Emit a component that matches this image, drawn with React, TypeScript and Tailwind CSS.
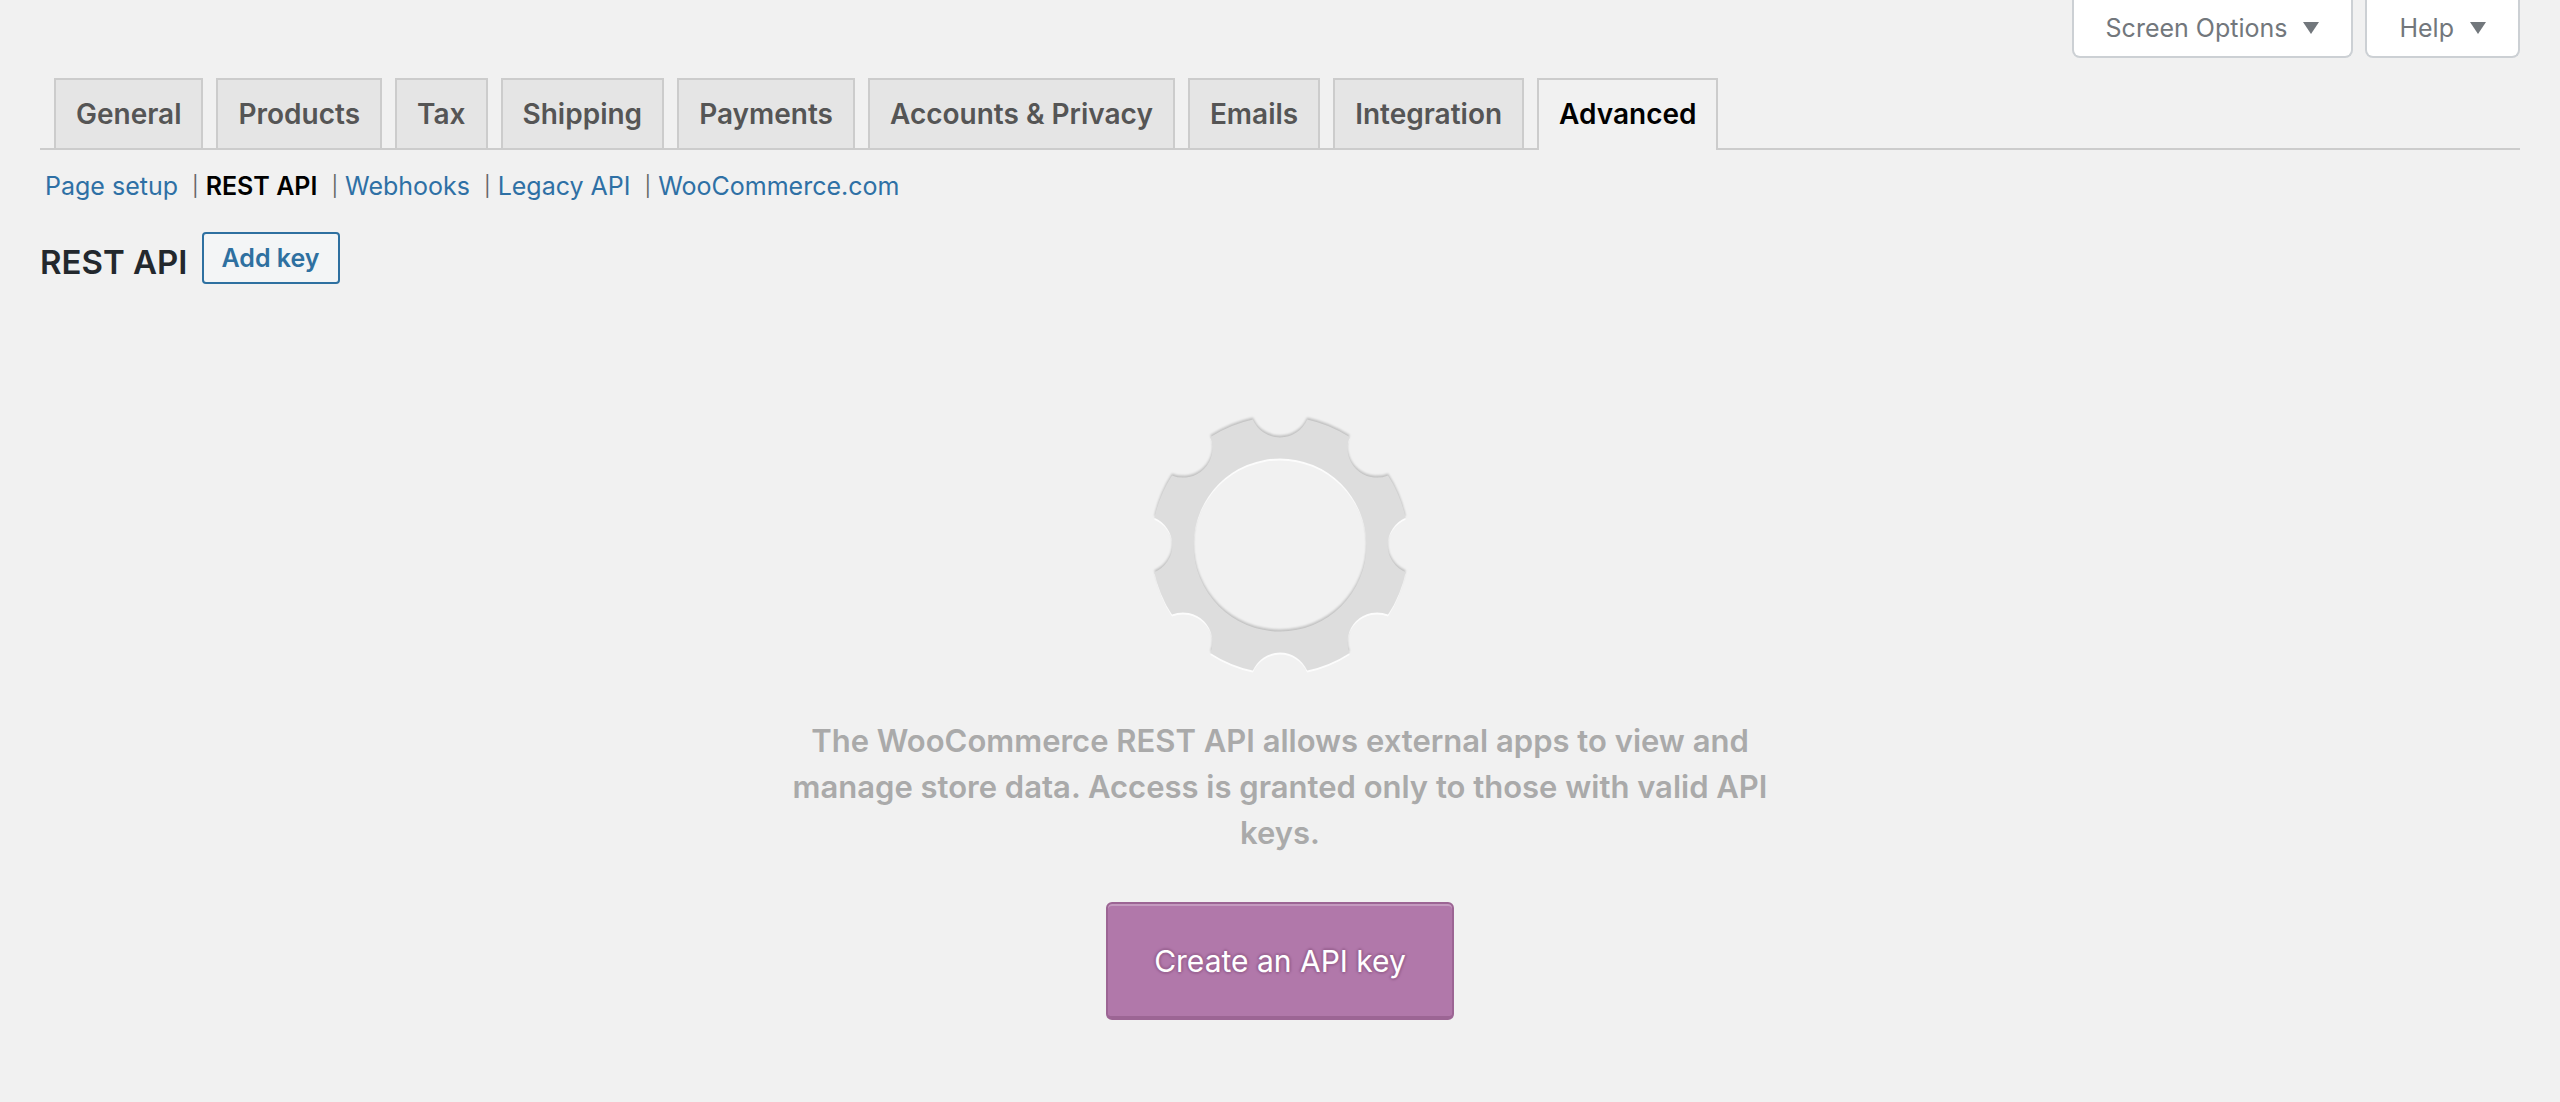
const TABS = [
  "General",
  "Products",
  "Tax",
  "Shipping",
  "Payments",
  "Accounts & Privacy",
  "Emails",
  "Integration",
  "Advanced",
];

const SECTIONS = [
  "Page setup",
  "REST API",
  "Webhooks",
  "Legacy API",
  "WooCommerce.com",
];

const ACTIVE_TAB = "Advanced";
const ACTIVE_SECTION = "REST API";

// Gear outline: a disc with eight round notches and a round hole
function gearPath() {
  const outer = 128.5;
  const notch = 29.5;
  const hole = 86.5;
  const half = 12.2;

  const point = (deg: number) => {
    const rad = (deg * Math.PI) / 180;
    return `${(outer * Math.cos(rad)).toFixed(2)} ${(outer * Math.sin(rad)).toFixed(2)}`;
  };

  let d = `M${point(half)}`;
  for (let angle = 45; angle <= 360; angle += 45) {
    d += `A${outer} ${outer} 0 0 1 ${point(angle - half)}`;
    d += `A${notch} ${notch} 0 0 0 ${point(angle + half)}`;
  }
  return `${d}ZM${hole} 0A${hole} ${hole} 0 1 0 -${hole} 0A${hole} ${hole} 0 1 0 ${hole} 0Z`;
}

const GEAR = gearPath();

function GearIcon() {
  return (
    <svg viewBox="-140 -140 280 280" className="size-[280px]" aria-hidden="true">
      <g fillRule="evenodd">
        <path d={GEAR} transform="translate(0 2)" fill="#fff" fillOpacity="0.8" />
        <path
          d={GEAR}
          transform="translate(0 -2)"
          fill="#000"
          fillOpacity="0.2"
          className="blur-[1px]"
        />
        <path d={GEAR} fill="#ddd" />
      </g>
    </svg>
  );
}

function ScreenMetaButton({ label }: { label: string }) {
  return (
    <button
      type="button"
      className="h-[58px] flex items-center gap-4 px-8 rounded-b-lg border-2 border-t-0 border-[#ccd0d4] bg-white text-[25px] text-[#72777c]"
    >
      <span className="pt-0.5">{label}</span>
      <svg viewBox="0 0 16 12" className="w-4 h-3" aria-hidden="true">
        <path d="M0 0h16L8 12z" fill="currentColor" />
      </svg>
    </button>
  );
}

export default function App() {
  return (
    <div className="min-h-screen bg-[#f1f1f1] px-10 font-['Inter',sans-serif] text-[#444]">
      <div className="flex justify-end gap-3">
        <ScreenMetaButton label="Screen Options" />
        <ScreenMetaButton label="Help" />
      </div>

      <nav className="mt-5 pl-3.5 flex gap-[13px] border-b-2 border-[#ccc]">
        {TABS.map((tab) => (
          <a
            key={tab}
            href="#"
            className={`px-5 py-2.5 border-2 border-b-0 border-[#ccc] text-[28px] leading-[48px] font-semibold whitespace-nowrap ${
              tab === ACTIVE_TAB
                ? "-mb-0.5 pb-3 bg-[#f1f1f1] text-black"
                : "bg-[#e5e5e5] text-[#555]"
            }`}
          >
            {tab}
          </a>
        ))}
      </nav>

      <ul className="mt-4 pl-[5px] flex text-[25px] leading-10 text-[#666]">
        {SECTIONS.map((section, index) => (
          <li key={section} className="flex">
            <a
              href="#"
              className={
                section === ACTIVE_SECTION
                  ? "font-semibold text-black"
                  : "text-[#2e70a5]"
              }
            >
              {section}
            </a>
            {index < SECTIONS.length - 1 && (
              <span className="pl-3.5 pr-[7px] text-xl leading-10">|</span>
            )}
          </li>
        ))}
      </ul>

      <div className="mt-[26px] flex items-start gap-3.5">
        <h2 className="pt-2 text-[33px] leading-[44px] font-semibold text-[#23282d]">
          REST API
        </h2>
        <button
          type="button"
          className="h-[52px] px-[18px] pt-0.5 rounded border-2 border-[#2e70a0] bg-[#f3f5f6] text-[25px] font-semibold text-[#2e70a0]"
        >
          Add key
        </button>
      </div>

      <div className="pt-[121px] flex flex-col items-center">
        <GearIcon />
        <p className="mt-[33px] w-full max-w-[1000px] text-center text-[31px] leading-[46px] font-semibold text-[#aaa]">
          The WooCommerce REST API allows external apps to view and manage store
          data. Access is granted only to those with valid API keys.
        </p>
        <button
          type="button"
          className="mt-[46px] h-[118px] px-[46px] pt-0.5 rounded-md border-2 border-b-4 border-[#9c6594] bg-[#b178aa] text-[30px] text-white shadow-[inset_0_2px_0_rgba(255,255,255,0.25)] [text-shadow:0_-2px_2px_#9c6594,2px_0_2px_#9c6594,0_2px_2px_#9c6594,-2px_0_2px_#9c6594]"
        >
          Create an API key
        </button>
      </div>
    </div>
  );
}
